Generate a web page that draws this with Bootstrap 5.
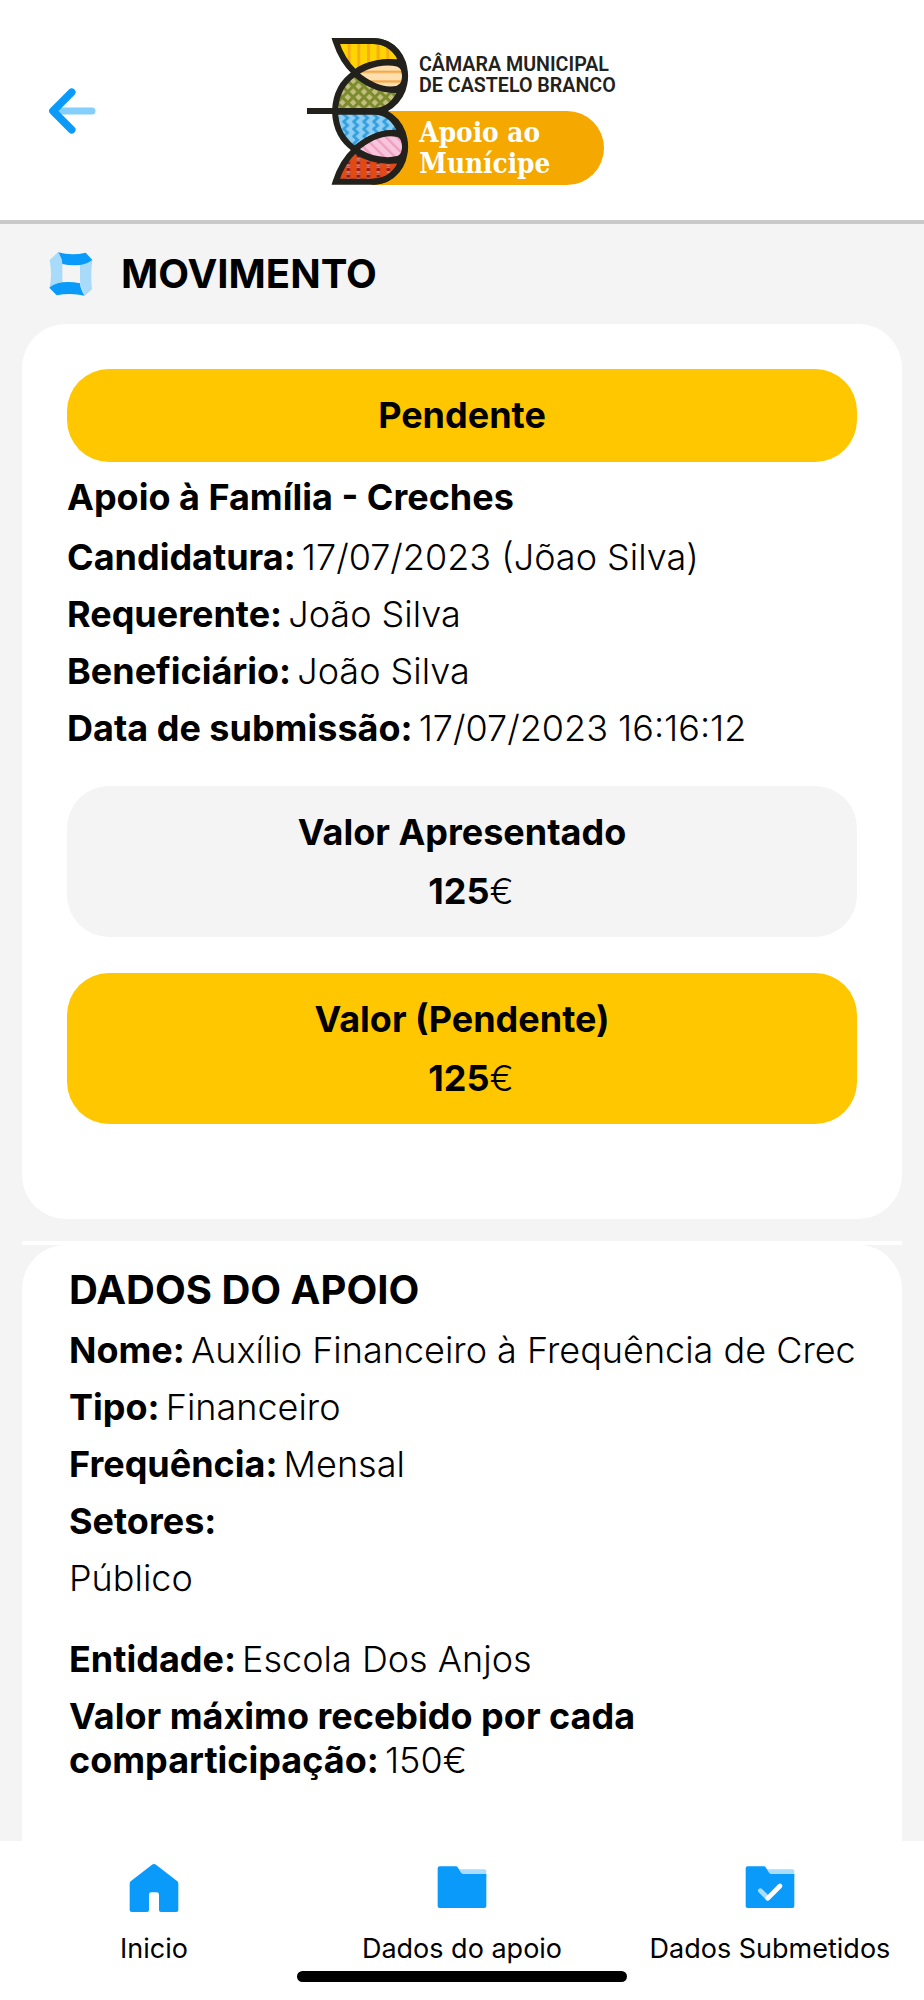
<!DOCTYPE html>
<html lang="pt">
<head>
<meta charset="utf-8">
<meta name="viewport" content="width=device-width, initial-scale=1">
<title>Apoio ao Munícipe - Movimento</title>
<link rel="stylesheet" href="https://cdn.jsdelivr.net/npm/bootstrap@5.3.0/dist/css/bootstrap.min.css">
<style>
  body { background: #f4f4f4; color: #000; font-family: Inter, "Liberation Sans", sans-serif; font-size: 36px; font-weight: 300; line-height: 44px; }
  .app-header { border-bottom: 4px solid #c9c9c9; padding: 36px 48px 34px; display: grid; grid-template-columns: 1fr auto 1fr; }
  .back-link { line-height: 0; }
  .page-title { padding: 28px 49px; gap: 28px; }
  h1, h2 { font-size: 40px; font-weight: 700; line-height: 44px; }
  b, h3 { font-weight: 700; }
  h3 { font-size: 36px; line-height: 44px; }
  .panel { background: #fff; border-radius: 44px; margin: 0 22px; }
  .panel-movement { padding: 45px 45px 95px; }
  .panel-support { padding: 23px 47px 44px; border-radius: 44px 44px 0 0; }
  .strip { height: 4px; background: #fff; border-radius: 2px 2px 0 0; margin: 22px 22px 0; }
  .status, .amount { border-radius: 42px; text-align: center; }
  .status { padding: 24px 0; line-height: 45px; font-weight: 700; background: #ffc700; }
  .amount { padding: 24px 0; background: #f4f4f4; margin-top: 36px; }
  .amount-pending { background: #ffc700; }
  .amount h3 { margin: 0 0 15px; }
  .amount div { padding-left: 18px; }
  .fields h3 { margin: 13px 0 16px; }
  .fields b { margin-right: -4px; }
  .fields p { margin: 0 0 13px; }
  .fields p:last-child { margin: 0; }
  .fields p.sectors { margin-bottom: 37px; }
  .tabs { background: #fff; padding-top: 23px; }
  .tabs a { color: #000; font-size: 27px; font-weight: 400; line-height: 32px; text-decoration: none; gap: 21px; white-space: nowrap; }
  .home-bar { width: 330px; height: 11px; border-radius: 6px; background: #000; margin: 6px auto 18px; }
</style>
</head>
<body class="min-vh-100 d-flex flex-column">
<header class="app-header bg-white align-items-center">
  <a href="#" class="back-link" aria-label="Voltar">
    <svg width="50" height="48" viewBox="83 55 150 144" fill="none" stroke-linecap="round" stroke-linejoin="round">
      <path d="M120 127H215" stroke="#84cffb" stroke-width="21"/>
      <path d="M154 71L98 127L154 183" stroke="#0a9bfa" stroke-width="23"/>
    </svg>
  </a>
  <svg class="overflow-visible" width="310" height="150" viewBox="24 18 930 450" role="img" aria-label="Câmara Municipal de Castelo Branco">
    <defs>
      <pattern id="py" width="29" height="29" patternUnits="userSpaceOnUse" x="143"><path fill="#ffd500" d="M0 0h29v29H0z"/><path fill="#f8ac18" d="M3 0h9v29H3z"/></pattern>
      <pattern id="pp" width="28" height="29" patternUnits="userSpaceOnUse" y="119"><path fill="#ffdfae" d="M0 0h28v29H0z"/><path fill="#f5a947" d="M0 3h28v7H0z"/></pattern>
      <pattern id="pg" width="23" height="23" patternUnits="userSpaceOnUse" patternTransform="rotate(45)"><path fill="#c3bf80" d="M0 0h23v23H0z"/><path fill="#7b8b2e" d="M0 0h23v9H0zM0 0h9v23H0z"/></pattern>
      <pattern id="pb" width="30" height="22" patternUnits="userSpaceOnUse" x="130"><path fill="#8fcdf3" d="M0 0h30v22H0z"/><path fill="none" stroke="#2f9fe0" stroke-width="8" d="M4 -11L16 0L4 11L16 22L4 33"/></pattern>
      <pattern id="pk" width="23" height="23" patternUnits="userSpaceOnUse" patternTransform="rotate(-45)"><path fill="#f7c6dc" d="M0 0h23v23H0z"/><path fill="#f09dc2" d="M0 0h7v23H0z"/></pattern>
      <pattern id="pr" width="30" height="20" patternUnits="userSpaceOnUse" x="143"><path fill="#e24a12" d="M0 0h30v20H0z"/><path fill="#98181d" d="M0 0h10v20H0z"/><path fill="#fbe6dc" d="M0 4h10v3H0zM0 11h10v2H0z"/></pattern>
    </defs>
    <path fill="#f5a800" d="M215 243H804A111 111 0 0 1 804 465H215z"/>
    <g stroke="#23211c" stroke-width="18">
      <path fill="url(#pg)" d="M168 130C205 165 260 186 307 178C290 220 262 243 226 243H108C110 195 130 155 168 130z"/>
      <path fill="url(#py)" d="M110 33H222C265 33 296 60 309 98C255 92 200 100 168 128C140 103 122 70 110 33z"/>
      <path fill="url(#pp)" d="M168 130C210 100 260 92 296 101C326 110 326 166 296 176C250 186 208 164 168 130z"/>
      <path fill="url(#pb)" d="M168 358C205 323 260 302 307 310C290 268 262 245 226 245H108C110 293 130 333 168 358z"/>
      <path fill="url(#pr)" d="M110 455H222C265 455 296 428 309 390C255 396 200 388 168 360C140 385 122 418 110 455z"/>
      <path fill="url(#pk)" d="M168 358C210 388 260 396 296 387C326 378 326 322 296 312C250 302 208 324 168 358z"/>
      <path fill="none" d="M222 33C284 33 318 84 318 138C318 198 276 243 226 243C276 243 318 290 318 350C318 404 284 455 222 455M24 243H235"/>
    </g>
    <g fill="#23211c" font-family="Roboto, sans-serif" font-weight="600" font-size="59">
      <text x="360" y="124">CÂMARA MUNICIPAL</text>
      <text x="360" y="187">DE CASTELO BRANCO</text>
    </g>
    <g fill="#fff" font-family="'DejaVu Serif Condensed', 'DejaVu Serif', serif" font-weight="700" font-size="83">
      <text x="361" y="335">Apoio ao</text>
      <text x="361" y="430">Munícipe</text>
    </g>
  </svg>
</header>

<div class="page-title d-flex align-items-center">
  <svg width="44" height="44" viewBox="147 122 132 132" aria-hidden="true">
    <path fill="#a8daf9" d="M174 123L149 146Q157 190 149 229Q165 215 187 213V158Q186 140 174 123zM277 146Q271 190 276 234L254 253Q242 232 240 213V160Q262 156 277 146z"/>
    <path fill="#0a9bfa" d="M174 123Q215 134 257 124L277 146Q262 158 240 161Q212 164 187 158Q186 138 174 123zM148 229L170 252Q212 244 254 253Q241 235 240 216Q212 210 187 213Q162 217 148 229z"/>
  </svg>
  <h1 class="m-0">MOVIMENTO</h1>
</div>

<section class="panel panel-movement">
  <div class="status">Pendente</div>
  <div class="fields">
    <h3>Apoio à Família - Creches</h3>
    <p><b>Candidatura:</b> 17/07/2023 (Jõao Silva)</p>
    <p><b>Requerente:</b> João Silva</p>
    <p><b>Beneficiário:</b> João Silva</p>
    <p><b>Data de submissão:</b> 17/07/2023 16:16:12</p>
  </div>
  <div class="amount"><h3>Valor Apresentado</h3><div><b>125</b>€</div></div>
  <div class="amount amount-pending"><h3>Valor (Pendente)</h3><div><b>125</b>€</div></div>
</section>

<div class="strip"></div>
<section class="panel panel-support flex-grow-1">
  <h2 class="mb-3">DADOS DO APOIO</h2>
  <div class="fields">
    <p class="text-nowrap"><b>Nome:</b> Auxílio Financeiro à Frequência de Crec</p>
    <p><b>Tipo:</b> Financeiro</p>
    <p><b>Frequência:</b> Mensal</p>
    <p><b>Setores:</b></p>
    <p class="sectors">Público</p>
    <p><b>Entidade:</b> Escola Dos Anjos</p>
    <p><b>Valor máximo recebido por cada comparticipação:</b> 150€</p>
  </div>
</section>

<footer class="tabs">
  <nav class="row g-0">
    <a href="#" class="col-4 d-flex flex-column align-items-center">
      <svg width="50" height="48" viewBox="58 41 150 144" aria-hidden="true"><path fill="#0a9bfa" d="M126 44Q133 38 140 44L203 93Q206 96 206 100V179Q206 185 200 185H154Q148 185 148 179V133Q148 126 141 126H125Q118 126 118 133V179Q118 185 112 185H66Q60 185 60 179V100Q60 96 63 93z"/></svg>
      <span>Inicio</span>
    </a>
    <a href="#" class="col-4 d-flex flex-column align-items-center">
      <svg width="50" height="48" viewBox="14 41 150 144" aria-hidden="true"><path fill="#acdcfc" d="M75 57H156Q162 57 162 63V80H80z"/><path fill="#0a9bfa" d="M22 48H70Q75 48 77 52L86 67Q89 71 93 71H162V167Q162 173 156 173H22Q16 173 16 167V54Q16 48 22 48z"/></svg>
      <span>Dados do apoio</span>
    </a>
    <a href="#" class="col-4 d-flex flex-column align-items-center">
      <svg width="50" height="48" viewBox="14 41 150 144" aria-hidden="true"><path fill="#acdcfc" d="M75 57H156Q162 57 162 63V80H80z"/><path fill="#0a9bfa" d="M22 48H70Q75 48 77 52L86 67Q89 71 93 71H162V167Q162 173 156 173H22Q16 173 16 167V54Q16 48 22 48z"/><g fill="none" stroke-width="14" stroke-linecap="round" stroke-linejoin="round"><path stroke="#acdcfc" d="M60 121L82 143"/><path stroke="#fff" d="M82 144L119 107"/></g></svg>
      <span>Dados Submetidos</span>
    </a>
  </nav>
  <div class="home-bar"></div>
</footer>
<script src="https://cdn.jsdelivr.net/npm/bootstrap@5.3.0/dist/js/bootstrap.bundle.min.js"></script>
</body>
</html>
